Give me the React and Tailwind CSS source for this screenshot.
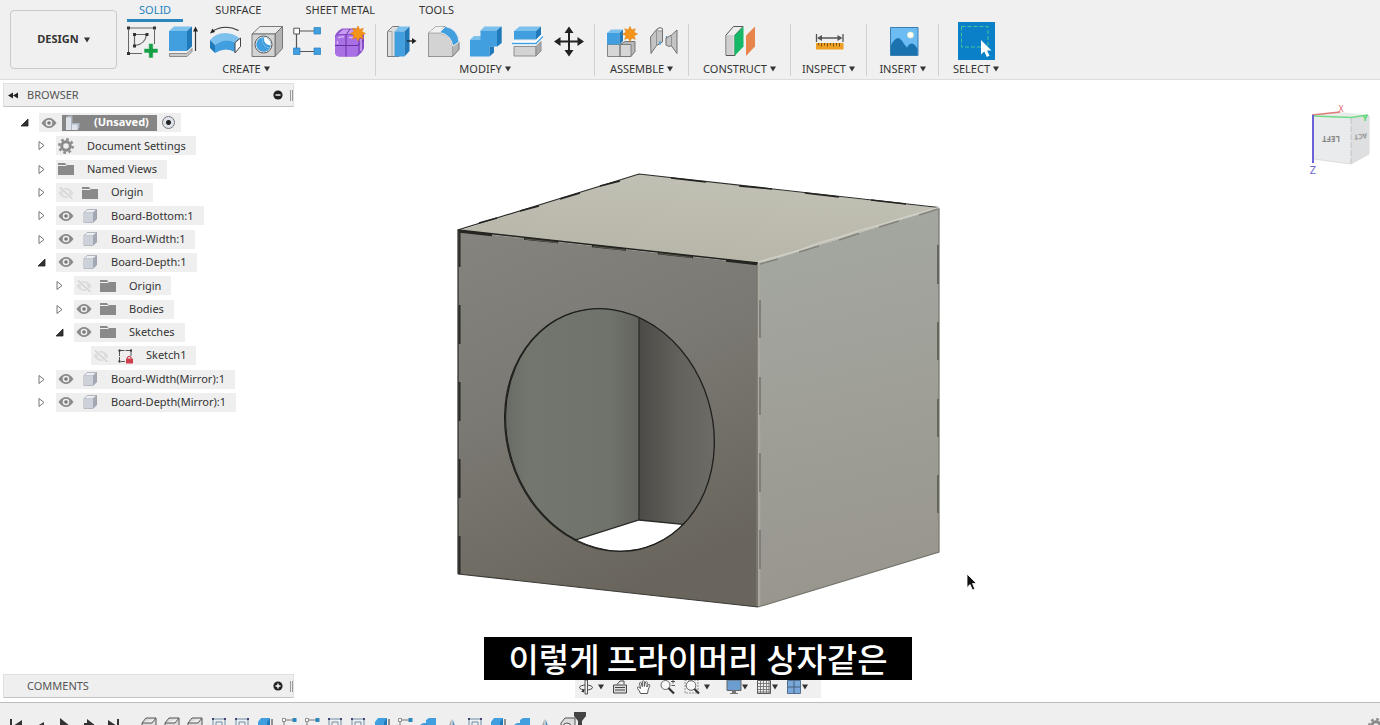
import React, { useState } from 'react';

const TABS = ['SOLID', 'SURFACE', 'SHEET METAL', 'TOOLS'];

const BLUE = '#419fdf';
const BLUE_LIGHT = '#7cc0ee';
const BLUE_DARK = '#2079b8';
const EDGE = '#6a6d6f';

const Star = ({ x, y }) => (
  <g transform={`translate(${x} ${y})`}>
    <path
      d="M0-7.5 1.7-3.9 5.3-5.3 3.9-1.7 7.5 0 3.9 1.7 5.3 5.3 1.7 3.9 0 7.5-1.7 3.9-5.3 5.3-3.9 1.7-7.5 0-3.9-1.7-5.3-5.3-1.7-3.9Z"
      fill="#f3951a"
      stroke="#e07f08"
      strokeWidth=".6"
    />
  </g>
);

const ICONS = {
  sketch: (
    <>
      <path d="M4.500 3H28M3.500 4.500V27M29.500 5V19M5 28.500H17" stroke="#666" strokeWidth="1" />
      <path d="M9.500 9.500H21.500M9.500 10V20.500M21.500 9.500Q20.500 19 10 20.500" stroke="#666" strokeWidth="1.200" fill="none" />
      <path d="M2 1.500h3v3H2zM28 1.500h3v3h-3zM2 27h3v3H2zM8 8h3v3H8zM20.500 8h3v3h-3zM8 19.500h3v3H8z" fill="#333" />
      <path d="M23.700 18.500h4.500v5h4.800v4.500h-4.800v5h-4.500v-5H19v-4.500h4.700z" fill="#16a045" stroke="#eee" strokeWidth=".6" />
    </>
  ),
  extrude: (
    <>
      <path d="M2.500 28.500h17.500l5-5v3l-5 5H2.500z" fill="#c9c9c9" stroke="#777" strokeWidth=".8" />
      <path d="M2 6 7 1.500H25L20 6Z" fill={BLUE_LIGHT} />
      <path d="M2 6H20V26H2Z" fill={BLUE} />
      <path d="M20 6 25 1.500V21.500L20 26Z" fill={BLUE_DARK} />
      <path d="M28.500 5V26" stroke="#333" strokeWidth="1.200" />
      <path d="M28.500 1.500 31 6.500H26Z" fill="#222" />
    </>
  ),
  revolve: (
    <>
      <path d="M3 6.500Q16-1.500 29.500 5.500" fill="none" stroke="#333" strokeWidth="1.200" />
      <path d="M1 8.500 3.500 3.500 6 7Z" fill="#222" />
      <path d="M1 15Q7 8 16 8T31.500 14L26 17.500Q16 12 6 20Z" fill={BLUE_LIGHT} />
      <path d="M1 15 6 20V28L1 23Z" fill={BLUE_DARK} />
      <path d="M6 20Q16 12 26 17.500V27Q16 21.500 6 28Z" fill={BLUE} />
      <path d="M26 17.500 31.500 13V21.500L26 28Z" fill="#fafafa" stroke="#444" strokeWidth="1" />
    </>
  ),
  hole: (
    <>
      <path d="M1 9 9 1.500H31.500L24 9Z" fill="#ececec" stroke={EDGE} strokeWidth=".9" />
      <path d="M24 9 31.500 1.500V23.500L24 31.500Z" fill="#b3b3b3" stroke={EDGE} strokeWidth=".9" />
      <path d="M1 9H24V31.500H1Z" fill="#d3d3d3" stroke={EDGE} strokeWidth=".9" />
      <circle cx="12.500" cy="19.500" r="8.500" fill="#f5f5f5" stroke="#555" strokeWidth="1" />
      <path d="M11.500 12.300A7.300 7.300 0 1 0 19 23Q10 22 11.500 12.300Z" fill={BLUE} />
      <path d="M11.500 12.300Q10 22 19 23A7.300 7.300 0 0 0 11.500 12.300Z" fill={BLUE} />
      <path d="M13 12.300Q12.500 20 19.700 20.500A7.300 7.300 0 0 0 13 12.300Z" fill="#fff" />
    </>
  ),
  pattern: (
    <>
      <path d="M7 6H21M3.500 9V23M7 26.500H21" stroke="#555" strokeWidth="1.200" />
      <path d="M.8 3.200H6.500V9H.8Z" fill="#fff" stroke="#555" strokeWidth="1" />
      <path d="M21 2.500H27.500V9H21ZM.500 23H7V29.500H.500ZM21 23H27.500V29.500H21Z" fill={BLUE} stroke="#267fbd" strokeWidth=".7" />
    </>
  ),
  form: (
    <>
      <path d="M7 3.500H22L29 10V23Q28 27 22 31.500H5Q0 31.500 0 26V11Q1 7 7 3.500Z" fill="#8b4fc9" />
      <path d="M0 15Q0 10 5 10H18Q23 10 23 15V27Q23 31.500 18 31.500H5Q0 31.500 0 27Z" fill="#a96fe4" />
      <path d="M3 9 8 4.500H23L19 9Z" fill="#c79af2" />
      <path d="M11 10V31.500M0 20.500H23L29 15M11 10 15 4" fill="none" stroke="#6a31a5" strokeWidth="1" />
      <path d="M3 13Q5 11.500 9 12M14 12.500H18M2.500 16V19M26 14V26" stroke="#dcbcfb" strokeWidth="1.300" fill="none" />
      <Star x={23} y={8.5} />
    </>
  ),
  pressPull: (
    <>
      <path d="M2.500 6.500 7.500 1.500H14V31.500H2.500Z" fill="#dedede" stroke={EDGE} strokeWidth=".9" />
      <path d="M7 6.500H2.500M7 6.500V31.500" stroke="#999" strokeWidth=".8" />
      <path d="M9.500 6.500 14 1.500H24.500L19.500 6.500Z" fill={BLUE_LIGHT} />
      <path d="M9.500 6.500H19.500V31.500H9.500Z" fill={BLUE} />
      <path d="M19.500 6.500 24.500 1.500V26L19.500 31.500Z" fill={BLUE_DARK} />
      <path d="M22 16H28" stroke="#222" strokeWidth="1.400" />
      <path d="M27 13 31.500 16 27 19Z" fill="#222" />
    </>
  ),
  fillet: (
    <>
      <path d="M1.500 8 9 1.500H17Q31 4 32 18V24.500L25.500 31.500H1.500Z" fill="#b5b5b5" stroke={EDGE} strokeWidth=".9" />
      <path d="M1.500 8 9 1.500H17L12 8Z" fill="#f1f1f1" />
      <path d="M1.500 8H12Q25 10 25.500 22V31.500H1.500Z" fill="#d3d3d3" stroke="#888" strokeWidth=".6" />
      <path d="M12.500 7.500 18.500 1.500Q31 4 32 17L25.800 21Q24 9.500 12.500 7.500Z" fill={BLUE} stroke="#eee" strokeWidth="1" />
    </>
  ),
  combine: (
    <>
      <path d="M11.500 5.500 15.500 1.500H32.500L28 5.500Z" fill={BLUE_LIGHT} />
      <path d="M28 5.500 32.500 1.500V18L28 21.500H20.500V31.500H1V15L5.500 11H11.500V5.500Z" fill={BLUE} />
      <path d="M1 15 5.500 11H11.500V15Z" fill={BLUE_LIGHT} />
      <path d="M28 5.500 32.500 1.500V18L28 21.500ZM20.500 21.500H25V27.500L20.500 31.500Z" fill={BLUE_DARK} />
    </>
  ),
  split: (
    <>
      <path d="M3 6 8.500 1.500H30L25 6Z" fill={BLUE_LIGHT} />
      <path d="M3 6H25V14.500H3Z" fill={BLUE} />
      <path d="M25 6 30 1.500V9.500L25 14.500Z" fill={BLUE_DARK} />
      <path d="M3 21.500H25V31H3Z" fill="#d3d3d3" stroke="#888" strokeWidth=".9" />
      <path d="M25 21.500 30 16.500V26L25 31Z" fill="#aaa" stroke="#888" strokeWidth=".9" />
      <path d="M1 18H25L32 11" fill="none" stroke="#fff" strokeWidth="3.500" />
      <path d="M1 18.500H25L32 11.500" fill="none" stroke={BLUE} strokeWidth="1.300" />
    </>
  ),
  move: (
    <>
      <path d="M16 6V27M5 16.500H27" stroke="#222" strokeWidth="2" />
      <path d="M16 1.500 20.500 8H11.500ZM16 31.500 11.500 25H20.500ZM1 16.500 7.500 12V21ZM31 16.500 24.500 12V21Z" fill="#222" />
    </>
  ),
  newComponent: (
    <>
      <path d="M15 19.500 20 16.500H30V26.500L26 31.500H15Z" fill="#b8b8b8" stroke={EDGE} strokeWidth=".9" />
      <path d="M2.500 19.500H15V31.500H2.500ZM15 19.500H26V31.500H15Z" fill="#d6d6d6" stroke={EDGE} strokeWidth=".8" />
      <path d="M2 8 6 4.500H18L14.500 8Z" fill={BLUE_LIGHT} />
      <path d="M2 8H14.500V19.500H2Z" fill={BLUE} />
      <path d="M14.500 8 18 4.500V16L14.500 19.500Z" fill={BLUE_DARK} />
      <Star x={25} y={9} />
    </>
  ),
  joint: (
    <>
      <path d="M3.500 12 9.500 4.500Q12 1.500 15.500 3.500V17L9.500 20.500 4 28.500Z" fill="#c4c4c4" stroke="#666" strokeWidth=".9" />
      <path d="M9.500 5V20.500" stroke="#888" strokeWidth=".8" />
      <ellipse cx="13" cy="4.500" rx="2.600" ry="1.600" fill="#eee" stroke="#777" strokeWidth=".7" />
      <path d="M13 16V20M19.500 11V18" stroke="#4aa3df" strokeWidth="1.300" />
      <path d="M30 5 24.500 10 19 13V20Q21 22 24.500 21L30 28.500Z" fill="#c4c4c4" stroke="#666" strokeWidth=".9" />
      <path d="M24.500 10V21" stroke="#888" strokeWidth=".8" />
    </>
  ),
  plane: (
    <>
      <path d="M2 10 9.500 1.500H19L11 10V30.500H2Z" fill="#ededed" stroke="#555" strokeWidth="1" />
      <path d="M2.500 10H9.500V30H2.500Z" fill="#cfcfcf" />
      <path d="M10.500 10.500 19.500 1.500V21.500L10.500 31Z" fill="#14b866" />
      <path d="M22 10.500 31 1.500V21.500L22 31Z" fill="#e7854c" />
    </>
  ),
  measure: (
    <>
      <path d="M3.500 9V17M30 9V17M7 13H27" stroke="#555" strokeWidth="1.300" />
      <path d="M4 13 9 10V16ZM29.500 13 24.500 10V16Z" fill="#555" />
      <path d="M3 18H30.500V24.500H3Z" fill="#eda022" />
      <path d="M5.500 18V20.500M8.500 18V21.500M11.500 18V20.500M14.500 18V21.500M17.500 18V20.500M20.500 18V21.500M23.500 18V20.500M26.500 18V21.500" stroke="#7c5310" strokeWidth="1" />
    </>
  ),
  image: (
    <>
      <path d="M3.500 2.500H31V30.500H3.500Z" fill="#6cbcf3" stroke="#3a7fb4" strokeWidth="1" />
      <path d="M4 20Q7 14 11 13Q14 13.500 17 19L20 22.500Q22 18.500 25 18.500 28 19 30.500 24V30H4Z" fill="#1a72ae" />
      <circle cx="23.500" cy="10" r="3" fill="#fff" stroke="#e4efc0" strokeWidth=".8" />
    </>
  ),
};

const GROUPS = [
  { name: 'CREATE', width: 'w-[259px]', icons: ['sketch', 'extrude', 'revolve', 'hole', 'pattern', 'form'] },
  { name: 'MODIFY', width: 'w-[219px]', icons: ['pressPull', 'fillet', 'combine', 'split', 'move'] },
  { name: 'ASSEMBLE', width: 'w-[94px]', icons: ['newComponent', 'joint'] },
  { name: 'CONSTRUCT', width: 'w-[102px]', icons: ['plane'] },
  { name: 'INSPECT', width: 'w-[76px]', icons: ['measure'] },
  { name: 'INSERT', width: 'w-[72px]', icons: ['image'] },
];

const Caret = () => (
  <svg viewBox="0 0 6 6" className="h-[6px] w-[6px]" aria-hidden="true">
    <path d="M0 .5H6L3 5.500Z" fill="#333" />
  </svg>
);

const ToolButton = ({ icon }) => (
  <button aria-label={icon} className="flex h-[38px] w-[42px] items-center justify-center">
    <svg viewBox="0 0 32 32" className="h-8 w-8 overflow-visible" fill="none">
      {ICONS[icon]}
    </svg>
  </button>
);

const Toolbar = () => {
  const [activeTab, setActiveTab] = useState('SOLID');

  return (
    <header className="flex h-20 shrink-0 border-b border-[#dcdcdc] bg-[#f0f0f0]">
      <button className="mt-[10px] ml-[10px] flex h-[59px] w-[107px] shrink-0 items-center justify-center gap-[5px] rounded-[4px] border border-[#c9c9c9] text-[11px] font-bold text-[#333]">
        DESIGN <Caret />
      </button>
      <div className="min-w-0 flex-1">
        <nav className="flex h-[22px] gap-5 pl-[10px]">
          {TABS.map((tab) => (
            <button
              key={tab}
              onClick={() => setActiveTab(tab)}
              className={`h-[22px] border-b-[3px] px-3 text-[11px] leading-[19px] whitespace-nowrap ${
                activeTab === tab ? 'border-[#2b86bd] text-[#1f83c0]' : 'border-transparent text-[#333]'
              }`}
            >
              {tab}
            </button>
          ))}
        </nav>
        <div className="flex">
          {GROUPS.map((group) => (
            <div key={group.name} className={`mt-[2px] flex h-[52px] shrink-0 flex-col items-center border-r border-[#d2d2d2] ${group.width}`}>
              <div className="-mt-[2px] flex">
                {group.icons.map((icon) => (
                  <ToolButton key={icon} icon={icon} />
                ))}
              </div>
              <button className="flex items-center gap-[3px] text-[11px] leading-[18px] text-[#333]">
                {group.name} <Caret />
              </button>
            </div>
          ))}
          <div className="flex w-[74px] shrink-0 flex-col items-center">
            <button aria-label="select" className="flex h-[38px] w-[37px] items-center justify-center bg-[#0a80c8]">
              <svg viewBox="0 0 37 37" className="h-[37px] w-[37px]">
                <path d="M3.500 3.500H30V24H3.500Z" fill="none" stroke="#43c39a" strokeWidth="1" strokeDasharray="4 2" />
                <path d="M23 17V31.500L26.300 28.500 28.800 34 31.500 32.700 29 27.500H33.500Z" fill="#fff" />
              </svg>
            </button>
            <button className="flex items-center gap-[3px] text-[11px] leading-[18px] text-[#333]">
              SELECT <Caret />
            </button>
          </div>
        </div>
      </div>
    </header>
  );
};

const EyeIcon = ({ hidden }) => (
  <svg viewBox="0 0 16 12" className="h-3 w-4">
    <path d="M.5 6Q4 1 8 1T15.500 6Q12 11 8 11T.5 6Z" fill={hidden ? '#dcdcdc' : '#8b8b8b'} />
    <circle cx="8" cy="6" r="3.300" fill="#eee" />
    <circle cx="8" cy="6" r="1.800" fill={hidden ? '#dcdcdc' : '#777'} />
    {hidden && <path d="M1.500 0 14 11.500" stroke="#eee" strokeWidth="3" />}
    {hidden && <path d="M2 .5 14.500 12" stroke="#d0d0d0" strokeWidth="1.200" />}
  </svg>
);

const NODE_ICONS = {
  gear: (
    <>
      <circle cx="8" cy="8" r="4.300" fill="none" stroke="#8a8a8a" strokeWidth="3" />
      <circle cx="8" cy="8" r="6.700" fill="none" stroke="#8a8a8a" strokeWidth="2.400" strokeDasharray="2.630 2.630" />
    </>
  ),
  folder: (
    <>
      <path d="M0 2H7L8.500 4H0Z" fill="#8a8a8a" />
      <path d="M0 5H8L9 4H16V14H0Z" fill="#8a8a8a" />
    </>
  ),
  body: (
    <>
      <path d="M2 4.500 5.500 1.500H14.500V11L11 14.500H2Z" fill="#a3a9b4" stroke="#8d929c" strokeWidth=".7" />
      <path d="M2 4.500H11V14.500H2Z" fill="#ccd1da" />
      <path d="M2.500 4.300 5.500 1.800H14L11 4.300Z" fill="#eceef2" />
    </>
  ),
  assembly: (
    <>
      <path d="M1 2.500 3 .500H7.500V8H14.500V12.500L12.500 15H1Z" fill="#aeb6c2" />
      <path d="M1 2.500H6V15H1ZM7 9.500H12.500V15H7Z" fill="#dfe3e9" />
    </>
  ),
  sketch: (
    <>
      <path d="M2.500 2.500H14V8M2.500 3V13.500H8" fill="none" stroke="#555" strokeWidth="1" strokeDasharray="5 1" />
      <path d="M1.500 1.500h2v2h-2zM13 1.500h2v2h-2zM1.500 12.500h2v2h-2z" fill="#333" />
      <path d="M10.500 10.500V9.500Q12.200 7 14 9.500V10.500" fill="none" stroke="#c22f3d" strokeWidth="1.200" />
      <path d="M9 10.500H16V15.500H9Z" fill="#cf3f4d" />
    </>
  ),
};

const NodeIcon = ({ type }) => (
  <svg viewBox="0 0 16 16" className="h-4 w-4">
    {NODE_ICONS[type]}
  </svg>
);

const NODES = [
  { label: 'Document Settings', level: 1, icon: 'gear' },
  { label: 'Named Views', level: 1, icon: 'folder' },
  { label: 'Origin', level: 1, icon: 'folder', eye: 'off' },
  { label: 'Board-Bottom:1', level: 1, icon: 'body', eye: 'on' },
  { label: 'Board-Width:1', level: 1, icon: 'body', eye: 'on' },
  { label: 'Board-Depth:1', level: 1, icon: 'body', eye: 'on', open: true },
  { label: 'Origin', level: 2, icon: 'folder', eye: 'off' },
  { label: 'Bodies', level: 2, icon: 'folder', eye: 'on' },
  { label: 'Sketches', level: 2, icon: 'folder', eye: 'on', open: true },
  { label: 'Sketch1', level: 3, icon: 'sketch', eye: 'off', leaf: true },
  { label: 'Board-Width(Mirror):1', level: 1, icon: 'body', eye: 'on' },
  { label: 'Board-Depth(Mirror):1', level: 1, icon: 'body', eye: 'on' },
];

const INDENT = { 1: 'pl-[37px]', 2: 'pl-[55px]', 3: 'pl-[72px]' };

const Twisty = ({ open, leaf }) => (
  <button aria-label="toggle" className="mr-[10px] h-[9px] w-[9px]">
    <svg viewBox="0 0 9 9" className="h-[9px] w-[9px]">
      {!leaf && open && <path d="M8 1V8H1Z" fill="#333" stroke="#222" strokeWidth=".8" />}
      {!leaf && !open && <path d="M2 .5 7 4.500 2 8.500Z" fill="#fff" stroke="#666" strokeWidth=".9" />}
    </svg>
  </button>
);

const TreeNode = ({ node }) => (
  <li className={`flex items-center ${INDENT[node.level]}`}>
    <Twisty open={node.open} leaf={node.leaf} />
    <div className="flex h-[19px] items-center bg-[#efefef] pr-[10px]">
      {node.eye && (
        <button aria-label="visibility" className="flex w-5 justify-center">
          <EyeIcon hidden={node.eye === 'off'} />
        </button>
      )}
      <span className={`flex justify-center ${node.eye ? 'mr-[7px] w-7' : 'mr-[11px] w-5'}`}>
        <NodeIcon type={node.icon} />
      </span>
      <span className="whitespace-nowrap">{node.label}</span>
    </div>
  </li>
);

const PanelHeader = ({ title, sign, arrows }) => (
  <div className="ml-[3px] flex h-6 items-center border border-[#e0e0e0] border-b-[#c4c4c4] bg-[#efefef] text-[11px] text-[#555]">
    <span className="flex w-[23px] pl-[4px]">
      {arrows && (
        <svg viewBox="0 0 10 7" className="h-[7px] w-[10px]">
          <path d="M5 .5V6.500L0 3.500ZM10 .5V6.500L5 3.500Z" fill="#222" />
        </svg>
      )}
    </span>
    <h2 className="flex-1">{title}</h2>
    <button aria-label={`${title} options`} className="mr-[7px]">
      <svg viewBox="0 0 10 10" className="h-[10px] w-[10px]">
        <circle cx="5" cy="5" r="4.600" fill="#222" />
        <path d={sign === 'plus' ? 'M2.500 5H7.500M5 2.500V7.500' : 'M2.500 5H7.500'} stroke="#fff" strokeWidth="1.400" />
      </svg>
    </button>
    <span className="h-[11px] w-[3px] border-x border-[#999]"></span>
  </div>
);

const BrowserPanel = () => (
  <aside className="col-start-1 row-start-1 flex w-[294px] flex-col justify-between pt-[3px] pb-[4px] text-[11px] text-[#333]">
    <section>
      <PanelHeader title="BROWSER" sign="minus" arrows />
      <ul className="mt-[4px] grid h-[303px] auto-rows-fr">
        <li className="flex items-center pl-[20px]">
          <Twisty open />
          <div className="flex h-[19px] items-center bg-[#efefef] pr-[6px]">
            <button aria-label="visibility" className="mr-[4px] flex w-[19px] justify-center">
              <EyeIcon />
            </button>
            <label htmlFor="active-root" className="flex h-4 items-center gap-[13px] bg-[#858585] pr-[8px] pl-[3px] font-bold text-white">
              <NodeIcon type="assembly" />
              (Unsaved)
            </label>
            <input
              id="active-root"
              type="radio"
              defaultChecked
              className="ml-[5px] h-[13px] w-[13px] appearance-none rounded-full border border-[#777] bg-[radial-gradient(circle,#222_0_2px,#dfe3ea_3px)]"
            />
          </div>
        </li>
        {NODES.map((node, index) => (
          <TreeNode key={index} node={node} />
        ))}
      </ul>
    </section>
    <PanelHeader title="COMMENTS" sign="plus" />
  </aside>
);

const Model = () => (
  <svg viewBox="0 80 1380 622" className="col-start-1 row-start-1 h-full w-full" role="img" aria-label="box model">
    <defs>
      <linearGradient id="front" x1=".1" y1="0" x2=".45" y2="1">
        <stop offset="0" stopColor="#85837e" />
        <stop offset=".45" stopColor="#7b7973" />
        <stop offset="1" stopColor="#69655c" />
      </linearGradient>
      <linearGradient id="side" x1=".4" y1="0" x2=".5" y2="1">
        <stop offset="0" stopColor="#a4a8a1" />
        <stop offset=".5" stopColor="#9f9f97" />
        <stop offset="1" stopColor="#98958d" />
      </linearGradient>
      <linearGradient id="top" x1=".7" y1="0" x2=".3" y2="1">
        <stop offset="0" stopColor="#c2c1b5" />
        <stop offset="1" stopColor="#b7b5a8" />
      </linearGradient>
      <linearGradient id="backWall" x1="0" y1="0" x2="1" y2="0">
        <stop offset="0" stopColor="#62645e" />
        <stop offset=".25" stopColor="#72766d" />
        <stop offset=".8" stopColor="#70736b" />
        <stop offset="1" stopColor="#62645d" />
      </linearGradient>
      <linearGradient id="innerSide" x1="0" y1="0" x2="1" y2="0">
        <stop offset="0" stopColor="#4b4a46" />
        <stop offset=".5" stopColor="#64635d" />
        <stop offset="1" stopColor="#706e67" />
      </linearGradient>
      <clipPath id="hole">
        <ellipse cx="609.500" cy="430" rx="123" ry="103" transform="rotate(73 609.500 430)" />
      </clipPath>
    </defs>
    <path d="M458 231 639 174 939 208 758 264Z" fill="url(#top)" />
    <path d="M458 231 758 264V607L458 574Z" fill="url(#front)" />
    <path d="M758 264 939 208V552L758 607Z" fill="url(#side)" />

    <g clipPath="url(#hole)">
      <path d="M490 300H639V520L490 567Z" fill="url(#backWall)" />
      <path d="M639 300H725V530L639 520Z" fill="url(#innerSide)" />
      <path d="M490 567 639 520 725 529V570H490Z" fill="#fff" />
      <path d="M639 300V520M490 567 639 520 725 528.500" fill="none" stroke="#2b2b28" strokeWidth="1.300" />
      <ellipse cx="610.500" cy="429.700" rx="123" ry="103" transform="rotate(73 610.500 429.700)" fill="none" stroke="#1b1b19" strokeWidth="1" />
    </g>
    <ellipse cx="609.500" cy="430" rx="123" ry="103" transform="rotate(73 609.500 430)" fill="none" stroke="#1f1f1d" strokeWidth="1.300" />

    {/* outline */}
    <path d="M458 574V230L639 174 939 207.500" fill="none" stroke="#2a2a28" strokeWidth="1.200" />
    <path d="M458 574 758 607" stroke="#3a3935" strokeWidth="1.200" />
    <path d="M758 607 939 552V208" fill="none" stroke="#74746d" strokeWidth="1.200" />
    <path d="M458 230 758 263" stroke="#22221f" strokeWidth="1.500" />
    <path d="M759 263V606" stroke="#aaa89f" strokeWidth="2.500" />
    <path d="M756.500 264V606" stroke="#77756e" strokeWidth="1" />
    <path d="M758 262 776 257 800 250 819 243 840 237 861 230 880 225 899 219 939 207.500" fill="none" stroke="#cfcfc6" strokeWidth="1.800" />

    {/* finger joints */}
    <path d="M459.500 231V267M459.500 305V344M459.500 382V421M459.500 459V498M459.500 536V574" stroke="#2b2b28" strokeWidth="2" />
    <path d="M938 245V284M938 322V360M938 399V437M938 475V513" stroke="#66665f" strokeWidth="2" />
    <path d="M760 300V338M760 377V415M760 453V492M760 530V569" stroke="#7c7b74" strokeWidth="1.800" />
    <path d="M460 231.500 492 235M524 238.500 558 242M592 246 626 249.500M658 253 693 257M726 260.500 757 264" stroke="#252522" strokeWidth="2.600" />
    <path d="M525 239 557 242.500M593 246.500 625 250M659 253.500 692 257.500" stroke="#5d5b50" strokeWidth="1" />
    <path d="M479 223 497 218M520 211 539 206M560 199 580 193M600 186 620 181M671 178 706 182M739 186 772 189M805 193 839 197M871 200 906 204" stroke="#222220" strokeWidth="1.500" />
    <path d="M760 264 778 259M799 252 819 246M839 240 859 233.500M879 227 899 221M919 215 938 209" stroke="#83837b" strokeWidth="1.500" />

    {/* pointer */}
    <path d="M967 574V587.500L970 584.500 972.500 590 974.800 589 972.500 583.500H976.500Z" fill="#111" stroke="#fff" strokeWidth=".8" />
  </svg>
);

const ViewCube = () => (
  <svg viewBox="0 0 75 80" className="absolute top-[20px] right-[5px] h-20 w-[75px]" role="img" aria-label="view cube">
    <path d="M13 15 40 12 69 15 51 19Z" fill="#e9ebe9" />
    <path d="M13 15 51 18V64L14 59Z" fill="#eaebec" />
    <path d="M51 18 69 15V54L51 64Z" fill="#dedfe0" />
    <path d="M51 18V64" stroke="#c2c2c2" strokeWidth="1" strokeDasharray="6 2" />
    <path d="M14 59 51 64 69 54V16" fill="none" stroke="#dcdcdc" strokeWidth="1" />
    <path d="M12 15 40 12" stroke="#e07a7a" strokeWidth="1.500" />
    <path d="M13 16 51 17.500 68 15" fill="none" stroke="#6fdc86" strokeWidth="1.500" />
    <path d="M13 15V63" stroke="#6a62d8" strokeWidth="2" />
    <text x="41" y="12" textAnchor="middle" fontSize="8" fill="#e0606c">X</text>
    <text x="65" y="21" textAnchor="middle" fontSize="9" fontWeight="bold" fill="#55d873">Y</text>
    <text x="13" y="74" textAnchor="middle" fontSize="11" fill="#6d68cf">Z</text>
    <text x="-31" y="-36" textAnchor="middle" fontSize="8" fontWeight="bold" fill="#888" transform="rotate(180)">LEFT</text>
    <text x="-60" y="-35" textAnchor="middle" fontSize="7" fontWeight="bold" fill="#999" transform="rotate(172 0 0) translate(5 -7)">ACT</text>
  </svg>
);

const NAV_TOOLS = [
  {
    name: 'orbit',
    caret: true,
    art: (
      <>
        <ellipse cx="8" cy="8.500" rx="6.500" ry="2.500" fill="none" stroke="#444" />
        <path d="M7 1H9.500V15H7Z" fill="#eee" stroke="#444" strokeWidth=".9" />
        <path d="M3 12.500 6 10V13.500Z" fill="#333" />
      </>
    ),
  },
  {
    name: 'look at',
    art: (
      <>
        <path d="M1.500 6H14.500V14H1.500Z" fill="#ddd" stroke="#444" />
        <path d="M3 8.500H13M3 11H13M5 5.500 8 2H12V5" fill="none" stroke="#444" />
      </>
    ),
  },
  {
    name: 'pan',
    art: (
      <path
        d="M4.500 14.500Q3.500 11.500 1.500 9.500 1 8 2.500 8L4.500 9.500 3.500 4Q4.500 2.500 5.300 4L6.300 7.500V2.500Q7.300 1 8.300 2.500V7.500L9.500 3Q10.500 2 11.300 3.500L10.800 8 12.500 5.500Q13.800 5 13.800 6.500 12 10 11.500 14.500Z"
        fill="#fff"
        stroke="#555"
      />
    ),
  },
  {
    name: 'zoom',
    art: (
      <>
        <circle cx="5.500" cy="6" r="4.500" fill="#f8f8f8" stroke="#666" />
        <path d="M8.500 9 14 14.500" stroke="#333" strokeWidth="2.200" />
        <path d="M11 2.500H15M13 .5V4.500M11.500 6.500H15" stroke="#444" strokeWidth=".9" />
      </>
    ),
  },
  {
    name: 'zoom window',
    caret: true,
    art: (
      <>
        <path d="M1 1H14V14H1Z" fill="none" stroke="#777" strokeWidth=".8" strokeDasharray="2 1" />
        <circle cx="7" cy="6.500" r="4.800" fill="#f8f8f8" stroke="#666" />
        <path d="M10.500 10 15 14.500" stroke="#333" strokeWidth="2.200" />
      </>
    ),
  },
];

const DISPLAY_TOOLS = [
  {
    name: 'display settings',
    caret: true,
    art: (
      <>
        <path d="M1 1H15V11.500H1Z" fill="#6b9dd0" stroke="#666" />
        <path d="M6 11.500H10V14H12V15H4V14H6Z" fill="#777" />
      </>
    ),
  },
  {
    name: 'grid',
    caret: true,
    art: (
      <>
        <path d="M1.500 1.500H14.500V14.500H1.500Z" fill="#eee" stroke="#555" />
        <path d="M4.500 1V15M7.500 1V15M10.500 1V15M13 1V15M1 4.500H15M1 7.500H15M1 10.500H15M1 13H15" stroke="#666" strokeWidth=".8" />
      </>
    ),
  },
  {
    name: 'viewports',
    caret: true,
    art: (
      <>
        <path d="M1.500 1.500H14.500V14.500H1.500Z" fill="#79a7d9" stroke="#54708f" />
        <path d="M8 1.500V14.500M1.500 8H14.500" stroke="#44617f" />
      </>
    ),
  },
];

const NavTool = ({ tool, gap }) => (
  <button aria-label={tool.name} className={`flex items-center ${gap}`}>
    <svg viewBox="0 0 16 16" className="h-4 w-4">{tool.art}</svg>
    {tool.caret && <Caret />}
  </button>
);

const NavigationBar = () => (
  <div className="flex h-[27px] w-[246px] items-center gap-4 bg-[#f0f0f0] pt-[5px] pl-[3px]">
    <div className="flex gap-2">
      {NAV_TOOLS.map((tool) => (
        <NavTool key={tool.name} tool={tool} gap="gap-[4px]" />
      ))}
    </div>
    <div className="flex gap-2">
      {DISPLAY_TOOLS.map((tool) => (
        <NavTool key={tool.name} tool={tool} gap="gap-0" />
      ))}
    </div>
  </div>
);

const PLAYBACK = [
  'M2 0H4V14H2ZM14 1V14L5 7Z',
  'M11 3V11L4 7ZM11 6H13V9H11Z',
  'M3 -1 13 7 3 15Z',
  'M2 4H5V0L14 7 5 14V10H2Z',
  'M2 1 11 7 2 14ZM11 0H13V14H11Z',
];

const FEATURES = [
  'body', 'body', 'body', 'sketch', 'sketch', 'extrude', 'pattern', 'pattern', 'sketch', 'sketch',
  'extrude', 'pattern', 'combine', 'mirror', 'sketch', 'extrude', 'combine', 'mirror', 'hole',
];

const FEATURE_ART = {
  body: <path d="M1 6 5 1H15V12L12 16H1ZM1 6H11L15 1" fill="#ddd" stroke="#555" />,
  sketch: (
    <>
      <path d="M2 2H14V14H2ZM5 5H11V11H5Z" fill="none" stroke="#6d8ea6" />
      <path d="M1 1h2v2H1zM13 1h2v2h-2z" fill="#447" />
    </>
  ),
  extrude: (
    <>
      <path d="M1 5 4 1H13V12L10 16H1Z" fill={BLUE} />
      <path d="M10 5 13 1V12L10 16Z" fill={BLUE_DARK} />
      <path d="M15 2V14" stroke="#333" />
    </>
  ),
  pattern: (
    <>
      <path d="M3 3H12M3 4V14" stroke="#777" />
      <path d="M1.500 1.500h3v3h-3z" fill="#fff" stroke="#777" strokeWidth=".8" />
      <path d="M11.500 1h4v4h-4z" fill="#3185bd" />
    </>
  ),
  combine: <path d="M0 8 3 6H6V3L9 1H16V10L13 16H0Z" fill={BLUE} />,
  mirror: (
    <>
      <path d="M7.500 2V16H2Z" fill="#aaa" />
      <path d="M8.500 2V16H14Z" fill="#5b93bd" />
    </>
  ),
  hole: (
    <>
      <path d="M1 6 5 1H15V12L12 16H1Z" fill="#ddd" stroke="#555" />
      <circle cx="7" cy="10" r="4" fill="#eee" stroke="#555" />
    </>
  ),
};

const Timeline = () => (
  <footer className="flex h-[23px] shrink-0 overflow-hidden border-t border-[#bdbdbd] bg-[#efefef]">
    <div className="mt-4 ml-[8px] flex w-[113px] shrink-0 justify-between">
      {PLAYBACK.map((d, index) => (
        <button key={index} aria-label={`playback ${index + 1}`} className="h-[14px] w-[15px]">
          <svg viewBox="0 0 15 14" className="h-[14px] w-[15px] overflow-visible">
            <path d={d} fill="#333" />
          </svg>
        </button>
      ))}
    </div>
    <div className="mt-[14px] ml-4 grid w-[443px] shrink-0 auto-cols-fr grid-flow-col justify-items-center">
      {FEATURES.map((type, index) => (
        <button key={index} aria-label={`${type} feature`} className="h-4 w-4">
          <svg viewBox="0 0 16 16" className="h-4 w-4" fill="none">{FEATURE_ART[type]}</svg>
        </button>
      ))}
    </div>
    <svg viewBox="0 0 12 20" className="mt-[9px] -ml-[6px] h-5 w-3 shrink-0">
      <path d="M0 0H12V4L8 9V20H4V9L0 4Z" fill="#444" />
    </svg>
    <button aria-label="timeline settings" className="mt-[15px] -mr-[4px] ml-auto h-4 w-4">
      <NodeIcon type="gear" />
    </button>
  </footer>
);

export default function App() {
  return (
    <div className="flex h-screen flex-col overflow-hidden bg-white font-['Noto_Sans','Noto_Sans_CJK_KR',sans-serif]">
      <Toolbar />
      <main className="relative grid min-h-0 flex-1 grid-cols-1 grid-rows-1">
        <Model />
        <ViewCube />
        <BrowserPanel />
        <div className="absolute inset-x-0 bottom-[4px] flex flex-col items-center pl-4">
          <p className="z-10 -mb-[9px] bg-black px-6 text-[33px] leading-[43px] font-medium whitespace-nowrap text-white font-['Noto_Sans_CJK_KR',sans-serif]">
            이렇게 프라이머리 상자같은
          </p>
          <NavigationBar />
        </div>
      </main>
      <Timeline />
    </div>
  );
}
